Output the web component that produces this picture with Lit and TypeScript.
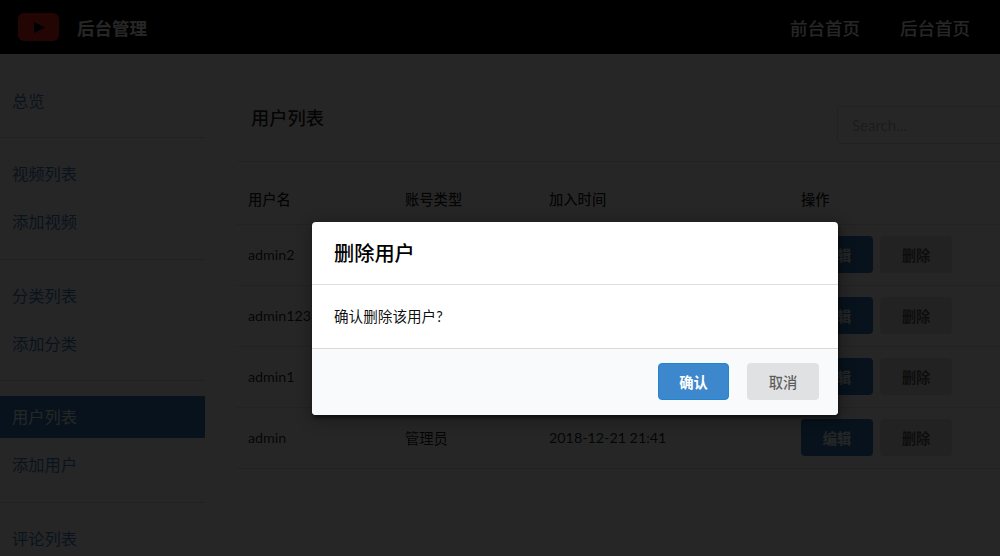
import { LitElement, html, css } from "lit";
import { customElement } from "lit/decorators.js";

const groups: { label: string; active?: boolean }[][] = [
  [{ label: "总览" }],
  [{ label: "视频列表" }, { label: "添加视频" }],
  [{ label: "分类列表" }, { label: "添加分类" }],
  [{ label: "用户列表", active: true }, { label: "添加用户" }],
  [{ label: "评论列表" }],
];

const users = [
  ["admin2", "管理员", "2018-12-21 21:41"],
  ["admin123", "管理员", "2018-12-21 21:41"],
  ["admin1", "管理员", "2018-12-21 21:41"],
  ["admin", "管理员", "2018-12-21 21:41"],
];

@customElement("app-root")
export class AppRoot extends LitElement {
  static styles = css`
    :host {
      display: block;
      position: relative;
      width: 1000px;
      height: 556px;
      overflow: hidden;
      background: #fff;
      color: rgba(0, 0, 0, 0.87);
      font-family: Lato, "Noto Sans CJK SC", sans-serif;
      font-size: 14.3px;
    }
    .nav {
      height: 54px;
      background: #000;
      color: #fff;
      display: flex;
      align-items: center;
      padding: 0 30px 0 18px;
      box-sizing: border-box;
      font-size: 17.5px;
    }
    .logo { width: 41px; height: 28px; display: block; margin-right: 18px; }
    .brand { font-weight: 700; flex: 1; }
    .links { display: flex; gap: 40px; font-weight: 500; }
    .layout { display: flex; height: 502px; }
    .side { width: 205px; flex: none; padding-top: 25.5px; box-sizing: border-box; }
    .group {
      padding-bottom: 15.5px;
      margin-bottom: 15px;
      border-bottom: 1px solid rgba(34, 36, 38, 0.15);
      display: flex;
      flex-direction: column;
      gap: 6px;
    }
    .group a {
      display: block;
      height: 42px;
      line-height: 42px;
      padding-left: 12px;
      font-size: 16.25px;
      color: #4183c4;
    }
    .group a.active { background: #2f7ab8; color: #fff; }
    .main { flex: none; width: 900px; padding: 52px 0 0 32px; box-sizing: border-box; }
    .head { display: flex; align-items: flex-start; padding-left: 14px; height: 55px; }
    .title { font-size: 18.25px; font-weight: 500; line-height: 24px; width: 586px; }
    .search {
      width: 200px;
      height: 38px;
      box-sizing: border-box;
      border: 1px solid rgba(34, 36, 38, 0.15);
      border-radius: 4px;
      padding: 0 14px;
      line-height: 36px;
      color: rgba(0, 0, 0, 0.3);
      font-size: 15px;
    }
    .rule { border-top: 1px solid rgba(34, 36, 38, 0.12); }
    table { border-collapse: collapse; width: 800px; margin-top: 17px; table-layout: fixed; }
    th, td { text-align: left; padding: 0 0 0 11px; border-bottom: 1px solid rgba(34, 36, 38, 0.12); font-size: 14.3px; }
    th { height: 45px; font-weight: 500; padding-bottom: 5px; box-sizing: border-box; }
    td { height: 60px; }
    .btn {
      display: inline-flex;
      align-items: center;
      justify-content: center;
      width: 72px;
      height: 37px;
      border-radius: 4px;
      font-weight: 700;
      font-size: 14.3px;
      background: #e0e1e2;
      color: rgba(0, 0, 0, 0.6);
      margin-right: 7px;
    }
    .btn.blue { background: #2f7ab8; color: #fff; }
    .dimmer {
      position: absolute;
      inset: 0;
      background: rgba(0, 0, 0, 0.85);
      display: flex;
      align-items: flex-start;
      justify-content: center;
    }
    .modal {
      width: 526px;
      margin-top: 222px;
      margin-left: 150px;
      background: #fff;
      border-radius: 4px;
      overflow: hidden;
      box-shadow: 1px 3px 3px 0 rgba(0, 0, 0, 0.4), 1px 3px 15px 2px rgba(0, 0, 0, 0.3);
    }
    .m-head {
      height: 63px;
      box-sizing: border-box;
      padding: 0 22px 2px;
      display: flex;
      align-items: center;
      font-size: 20.2px;
      font-weight: 500;
      color: #000;
      border-bottom: 1px solid rgba(34, 36, 38, 0.15);
    }
    .m-body {
      height: 63px;
      box-sizing: border-box;
      padding: 0 22px 2px;
      display: flex;
      align-items: center;
      font-size: 14.6px;
      color: rgba(0, 0, 0, 0.95);
    }
    .m-foot {
      height: 67px;
      box-sizing: border-box;
      background: #f9fafb;
      border-top: 1px solid rgba(34, 36, 38, 0.15);
      padding: 14px 19px 0 0;
      display: flex;
      justify-content: flex-end;
      gap: 18px;
    }
    .m-foot .btn { margin: 0; }
    .m-foot .primary {
      width: 71px;
      background: #3d87cd;
      border: 1px solid #2185d0;
      box-sizing: border-box;
      color: #fff;
    }
    .m-foot .plain { font-weight: 500; }
  `;

  render() {
    return html`
      <div class="nav">
        <svg class="logo" viewBox="0 0 41 28">
          <rect width="41" height="28" rx="6" fill="#e8261c"></rect>
          <path d="M16 9l11 5.5-11 5.5z" fill="#000"></path>
        </svg>
        <span class="brand">后台管理</span>
        <div class="links"><span>前台首页</span><span>后台首页</span></div>
      </div>
      <div class="layout">
        <aside class="side">
          ${groups.map(
            (g) => html`<div class="group">
              ${g.map((i) => html`<a class=${i.active ? "active" : ""}>${i.label}</a>`)}
            </div>`
          )}
        </aside>
        <main class="main">
          <div class="head">
            <div class="title">用户列表</div>
            <div class="search">Search...</div>
          </div>
          <div class="rule"></div>
          <table>
            <colgroup>
              <col style="width:157px" /><col style="width:144px" /><col style="width:252px" /><col />
            </colgroup>
            <thead>
              <tr><th>用户名</th><th>账号类型</th><th>加入时间</th><th>操作</th></tr>
            </thead>
            <tbody>
              ${users.map(
                (u) => html`<tr>
                  <td>${u[0]}</td><td>${u[1]}</td><td>${u[2]}</td>
                  <td><span class="btn blue">编辑</span><span class="btn">删除</span></td>
                </tr>`
              )}
            </tbody>
          </table>
        </main>
      </div>
      <div class="dimmer">
        <div class="modal">
          <div class="m-head">删除用户</div>
          <div class="m-body">确认删除该用户?</div>
          <div class="m-foot">
            <span class="btn primary">确认</span>
            <span class="btn plain">取消</span>
          </div>
        </div>
      </div>
    `;
  }
}
